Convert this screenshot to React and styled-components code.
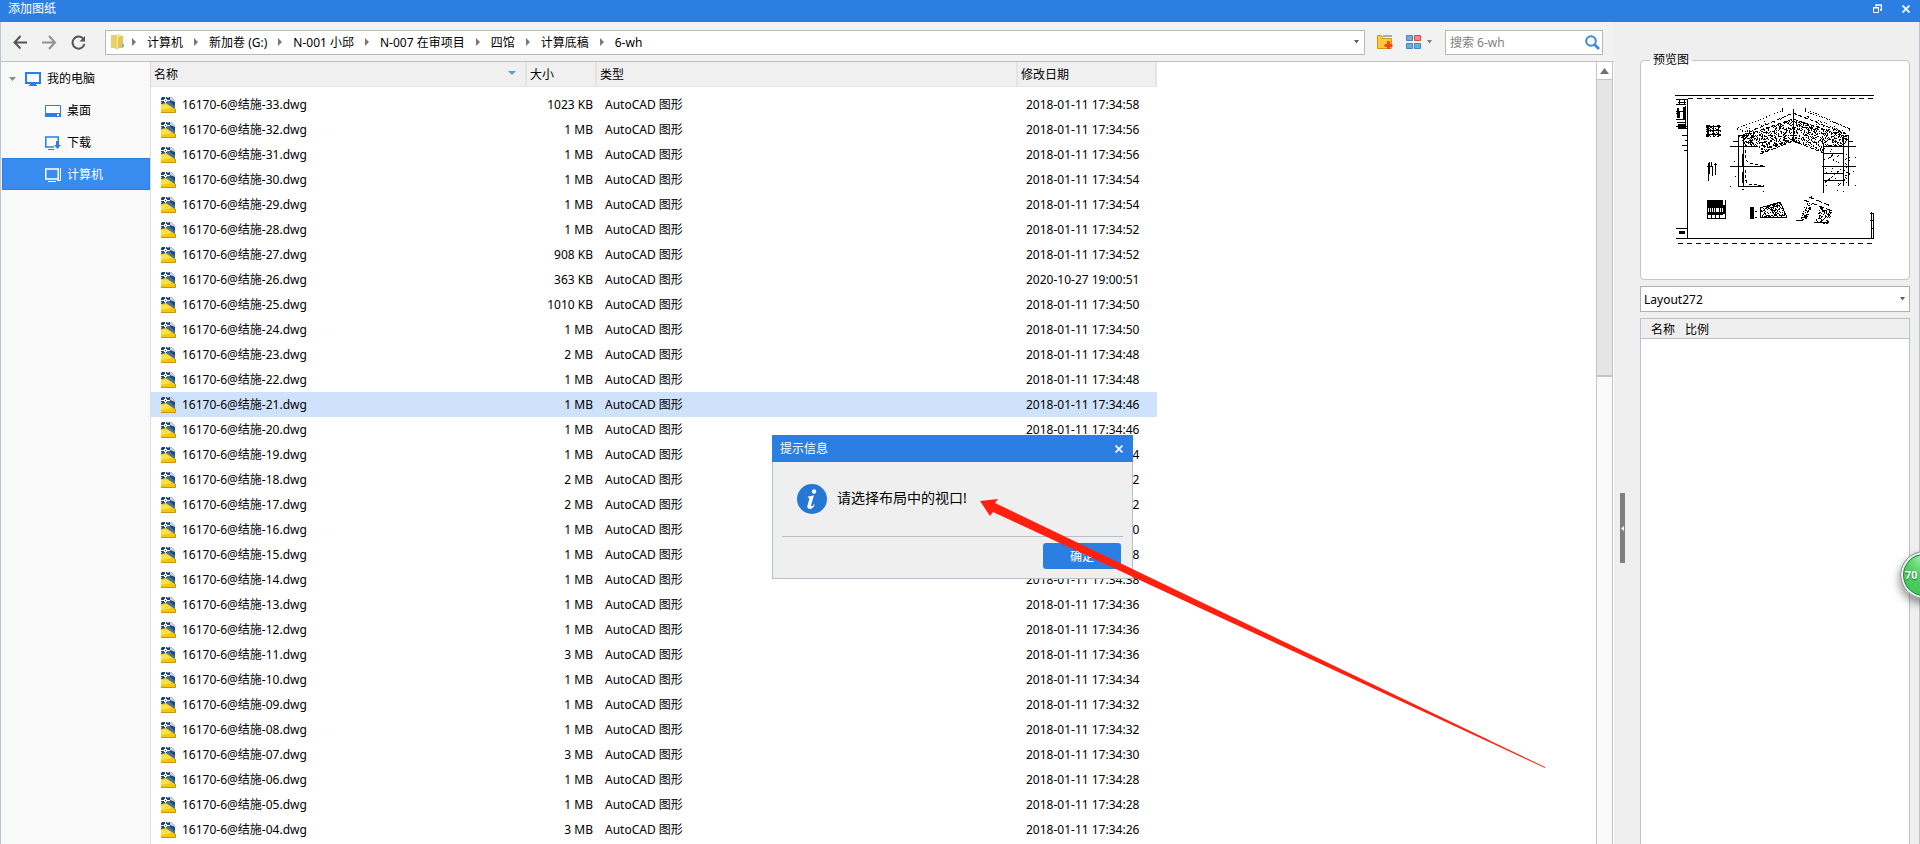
import { useState } from "react";
import styled, { createGlobalStyle } from "styled-components";

const GlobalStyle = createGlobalStyle`
  * {
    box-sizing: border-box;
  }

  body {
    margin: 0;
    overflow: hidden;
    font-family: "Noto Sans", "Noto Sans CJK SC", sans-serif;
    font-size: 12px;
    line-height: 16px;
    color: #000000;
  }

  button, input, select {
    font: inherit;
    color: inherit;
    margin: 0;
  }

  svg {
    display: block;
    flex: none;
  }
`;

const Window = styled.div`
  height: 100vh;
  display: flex;
  flex-direction: column;
  background-color: #efefef;
`;

const TitleBar = styled.header`
  height: 22px;
  flex: none;
  padding: 0 8px;
  display: flex;
  justify-content: space-between;
  background-color: #2c7fe2;
  color: #ffffff;
`;

const Title = styled.h1`
  margin: 0;
  font-size: 12px;
  line-height: 18px;
  font-weight: normal;
`;

const WindowButtons = styled.div`
  display: flex;
  align-items: flex-start;
  gap: 14px;
`;

const PlainButton = styled.button`
  border: none;
  background: none;
  padding: ${(props) => props.$pad || "0"};
  cursor: pointer;
`;

const Main = styled.div`
  flex: 1;
  min-height: 0;
  display: flex;
  border-left: 1px solid #bcc4d4;
  border-right: 1px solid #bcc4d4;
`;

const Browser = styled.section`
  flex: 1;
  min-width: 0;
  display: flex;
  flex-direction: column;
`;

const Toolbar = styled.div`
  height: 40px;
  flex: none;
  display: flex;
  align-items: center;
  padding: 1px 11px 0 12px;
  background-color: #f2f2f2;
  border-bottom: 1px solid #c0c0c0;
`;

const NavButtons = styled.div`
  display: flex;
  gap: 14px;
  margin-right: 19px;
`;

const AddressBar = styled.nav`
  flex: 1;
  height: 25px;
  display: flex;
  align-items: center;
  padding: 0 5px;
  background-color: #ffffff;
  border: 1px solid #b8b8b8;
`;

const Crumb = styled.a`
  padding: 1px 11px 0;
  color: #000000;
  text-decoration: none;
  white-space: nowrap;
`;

const FolderSlot = styled.span`
  margin-right: 7px;
`;

const Spacer = styled.span`
  flex: 1;
`;

const ToolButtons = styled.div`
  display: flex;
  align-items: center;
  gap: 12px;
  margin: 0 13px 0 12px;
`;

const ViewButton = styled(PlainButton)`
  display: flex;
  align-items: center;
  gap: 6px;
`;

const SearchBox = styled.label`
  width: 158px;
  height: 25px;
  display: flex;
  align-items: center;
  padding: 0 2px 0 4px;
  background-color: #ffffff;
  border: 1px solid #b8b8b8;

  > input {
    flex: 1;
    min-width: 0;
    border: none;
    outline: none;
    padding: 1px 0 0;
    background: none;
  }

  > input::placeholder {
    color: #808080;
  }
`;

const Content = styled.div`
  flex: 1;
  min-height: 0;
  display: flex;
  background-color: #ffffff;
`;

const Sidebar = styled.nav`
  width: 150px;
  flex: none;
  background-color: #f9f9f9;
  border-right: 1px solid #dcdce0;
`;

const PlaceLink = styled.a`
  height: 32px;
  margin-left: 1px;
  display: flex;
  align-items: center;
  gap: 6px;
  padding-top: 2px;
  padding-left: ${(props) => (props.$root ? "6px" : "42px")};
  color: ${(props) => (props.$active ? "#ffffff" : "#000000")};
  background-color: ${(props) => (props.$active ? "#388cf0" : "transparent")};
  border: 1px solid ${(props) => (props.$active ? "#2c7fe2" : "transparent")};
  text-decoration: none;

  > svg:first-child {
    margin-right: ${(props) => (props.$root ? "3px" : "0")};
  }
`;

const FileArea = styled.div`
  flex: 1;
  min-width: 0;
  overflow: hidden;
`;

const FileTable = styled.table`
  width: 1006px;
  table-layout: fixed;
  border-collapse: separate;
  border-spacing: 0;

  > tbody::before {
    content: "";
    display: block;
    height: 5px;
  }
`;

const HeadCell = styled.th`
  height: 25px;
  padding: 2px 9px 0 3px;
  font-weight: normal;
  text-align: left;
  background-color: #f0f0f0;
  border-right: 2px solid #e4e4e4;
  border-bottom: 1px solid #e4e4e4;
`;

const HeadLabel = styled.div`
  display: flex;
  align-items: center;
  justify-content: space-between;
`;

const Row = styled.tr`
  background-color: ${(props) => (props.$selected ? "#cfe2fc" : "#ffffff")};
  cursor: default;
`;

const Cell = styled.td`
  height: 25px;
  padding: 0 4px 0 8px;
  text-align: ${(props) => props.$align || "left"};
  white-space: nowrap;
`;

const FileName = styled.div`
  display: flex;
  align-items: center;
  gap: 6px;
  padding-left: 2px;
`;

const ScrollBar = styled.div`
  width: 17px;
  flex: none;
  margin-right: 1px;
  display: flex;
  flex-direction: column;
  background-color: #fafafa;
  border-left: 1px solid #c4c4c4;
  border-right: 1px solid #c4c4c4;
`;

const ScrollUp = styled.button`
  height: 18px;
  flex: none;
  padding: 0;
  display: grid;
  place-items: center;
  background-color: #ffffff;
  border: none;
  border-bottom: 1px solid #c4c4c4;
`;

const ScrollThumb = styled.div`
  height: 38%;
  background-color: #e5e5e5;
  border-bottom: 2px solid #c4c4c4;
`;

const Splitter = styled.div`
  width: 26px;
  flex: none;
  display: flex;
  align-items: center;
  padding-left: 6px;
`;

const CollapseButton = styled.button`
  width: 5px;
  height: 70px;
  margin-top: 190px;
  padding: 0;
  display: grid;
  place-items: center;
  border: none;
  background-color: #808080;
`;

const SidePanel = styled.aside`
  width: 279px;
  flex: none;
  display: flex;
  flex-direction: column;
  gap: 6px;
  padding: 30px 9px 0 0;
`;

const PreviewBox = styled.fieldset`
  height: 228px;
  flex: none;
  margin: 0;
  padding: 0 0 0 34px;
  border: 1px solid #c4c4c8;
  border-radius: 4px;
  /* the panel colour shows above the frame line */
  background: linear-gradient(#ffffff, #ffffff) no-repeat;

  > legend {
    margin-left: -25px;
    padding: 0 3px;
    line-height: 16px;
    background: linear-gradient(#efefef 50%, #ffffff 50%);
  }

  > svg {
    margin-top: 26px;
  }
`;

const SelectWrap = styled.div`
  height: 26px;
  flex: none;
  display: flex;
  align-items: center;
  padding-right: 4px;
  background-color: #ffffff;
  border: 1px solid #b0b0b0;

  > select {
    flex: 1;
    appearance: none;
    border: none;
    outline: none;
    background: none;
    padding: 2px 3px 0;
  }
`;

const Viewports = styled.div`
  flex: 1;
  background-color: #ffffff;
  border: 1px solid #c0c0cc;
  border-bottom: none;
`;

const ViewportTable = styled.table`
  width: 100%;
  border-spacing: 0;
  background-color: #efefef;
  border-bottom: 1px solid #c0c0c4;

  th {
    width: 34px;
    height: 19px;
    padding: 2px 0 0 10px;
    font-weight: normal;
    text-align: left;
    white-space: nowrap;
  }

  th:last-child {
    width: auto;
  }
`;

const Dialog = styled.div.attrs({ role: "alertdialog" })`
  position: fixed;
  left: 772px;
  top: 435px;
  width: 361px;
  background-color: #efefef;
  border: 1px solid #b8c0d0;
  border-top: none;
`;

const DialogTitle = styled.div`
  height: 27px;
  margin: 0 -1px;
  padding: 0 10px 0 8px;
  display: flex;
  align-items: center;
  justify-content: space-between;
  background-color: #2c7fe2;
  color: #ffffff;
`;

const DialogBody = styled.div`
  height: 75px;
  margin: 0 9px;
  padding: 0 15px;
  display: flex;
  align-items: center;
  gap: 10px;
  font-size: 14px;
  line-height: 20px;
  border-bottom: 1px solid #b8bec8;
`;

const Message = styled.p`
  margin: 0;
  padding-bottom: 2px;
`;

const DialogFooter = styled.div`
  padding: 6px 11px 9px;
  display: flex;
  justify-content: flex-end;
`;

const OkButton = styled.button`
  width: 78px;
  height: 26px;
  padding: 2px 0 0;
  border: none;
  border-radius: 3px;
  background-color: #2c7fe2;
  color: #ffffff;
`;

const Arrow = styled.svg`
  position: fixed;
  left: 980px;
  top: 499px;
  pointer-events: none;
`;

const SpeedBall = styled.button`
  position: fixed;
  right: -28px;
  top: 551px;
  width: 48px;
  height: 48px;
  padding: 0 0 0 4px;
  text-align: left;
  font-weight: bold;
  font-size: 11px;
  color: #ffffff;
  text-shadow: 0 1px 1px #1c6b35;
  border: 1px solid #9a9a9a;
  border-radius: 50%;
  background: radial-gradient(circle at 50% 10%, #a8ecae 0, #4fd060 40%, #3fc054 100%);
  box-shadow: inset 0 0 0 2px #f2f2f2, inset 0 0 0 3px #1f7d50, -1px 5px 8px rgba(0, 0, 0, 0.4);
`;

const crumbs = ["计算机", "新加卷 (G:)", "N-001 小邱", "N-007 在审项目", "四馆", "计算底稿", "6-wh"];

const files = [
  ["33", "1023 KB", "2018-01-11 17:34:58"],
  ["32", "1 MB", "2018-01-11 17:34:56"],
  ["31", "1 MB", "2018-01-11 17:34:56"],
  ["30", "1 MB", "2018-01-11 17:34:54"],
  ["29", "1 MB", "2018-01-11 17:34:54"],
  ["28", "1 MB", "2018-01-11 17:34:52"],
  ["27", "908 KB", "2018-01-11 17:34:52"],
  ["26", "363 KB", "2020-10-27 19:00:51"],
  ["25", "1010 KB", "2018-01-11 17:34:50"],
  ["24", "1 MB", "2018-01-11 17:34:50"],
  ["23", "2 MB", "2018-01-11 17:34:48"],
  ["22", "1 MB", "2018-01-11 17:34:48"],
  ["21", "1 MB", "2018-01-11 17:34:46"],
  ["20", "1 MB", "2018-01-11 17:34:46"],
  ["19", "1 MB", "2018-01-11 17:34:44"],
  ["18", "2 MB", "2018-01-11 17:34:42"],
  ["17", "2 MB", "2018-01-11 17:34:42"],
  ["16", "1 MB", "2018-01-11 17:34:40"],
  ["15", "1 MB", "2018-01-11 17:34:38"],
  ["14", "1 MB", "2018-01-11 17:34:38"],
  ["13", "1 MB", "2018-01-11 17:34:36"],
  ["12", "1 MB", "2018-01-11 17:34:36"],
  ["11", "3 MB", "2018-01-11 17:34:36"],
  ["10", "1 MB", "2018-01-11 17:34:34"],
  ["09", "1 MB", "2018-01-11 17:34:32"],
  ["08", "1 MB", "2018-01-11 17:34:32"],
  ["07", "3 MB", "2018-01-11 17:34:30"],
  ["06", "1 MB", "2018-01-11 17:34:28"],
  ["05", "1 MB", "2018-01-11 17:34:28"],
  ["04", "3 MB", "2018-01-11 17:34:26"],
];

const Triangle = ({ dir = "down", color = "#606060" }) =>
  dir === "down" ? (
    <svg width='5' height='4'>
      <path d='M0 0h5L2.5 3.5z' fill={color} />
    </svg>
  ) : (
    <svg width='4' height='8'>
      <path d='M0 0l4 4-4 4z' fill={color} />
    </svg>
  );

const CloseIcon = () => (
  <svg width='8' height='8'>
    <path d='M.5 .5l7 7M7.5 .5l-7 7' stroke='#fff' strokeWidth='1.7' />
  </svg>
);

const FileIcon = () => (
  <svg width='15' height='16' viewBox='0 0 15 16'>
    <path d='M0 0h10l4 4v9H0z' fill='#1d4673' />
    <path d='M7 3l7 6v3L5 7z' fill='#47709a' />
    <path d='M9 0h1l4 4v1l-5-2z' fill='#c9d6e2' />
    <path d='M0 0h1v1H0zM6 0h2v1H6zM0 5h1v1H0z' fill='#9fb4c8' />
    <path d='M4.500 0v7M0 3.500h9' stroke='#fff' />
    <path d='M3 2h1v1H3zM5 2h1v1H5zM3 4h1v1H3zM5 4h1v1H5z' fill='#fff' />
    <path d='M4 3h1v1H4z' fill='#1d4673' />
    <path d='M0 7l5-1 9 6v4H0z' fill='#f2c80c' />
    <path d='M0 8l5-1 6 4-11 2z' fill='#fae04a' />
    <path d='M0 15.500h14.500V12' fill='none' stroke='#c8960c' />
  </svg>
);

const Monitor = ({ kind, color = "#2c7fe2" }) => (
  <svg width='16' height='14' viewBox='0 0 16 14' fill='none' stroke={color}>
    {kind === "root" && (
      <>
        <path d='M1 1h14v10H1z' strokeWidth='2' />
        <path d='M5 12.5h6M4 13.5h8' />
      </>
    )}
    {kind === "desktop" && (
      <>
        <path d='M.5 1.5h15v11H.5z' fill='#fff' />
        <path d='M0 9h16v4H0z' fill={color} stroke='none' />
        <path d='M12 10h2v2h-2z' fill='#fff' stroke='none' />
      </>
    )}
    {kind === "download" && (
      <>
        <path d='M9 11H.75V1h12.5v4' strokeWidth='1.5' />
        <path d='M3 13.5h6' />
        <path d='M11 5h3v4h2l-3.5 4L9 9h2z' fill={color} stroke='none' />
      </>
    )}
    {kind === "computer" && (
      <>
        <path d='M.75 1h12.5v10H.75z' strokeWidth='1.5' />
        <path d='M15.5 0v12.5H12M3 13.5h8' />
      </>
    )}
  </svg>
);

// fills a polygon with drawing noise, the same on every render
const speckle = (pts, density, seed) => {
  let s = seed * 7919;
  const rand = () => {
    s = (s + 0x6d2b79f5) | 0;
    let t = Math.imul(s ^ (s >>> 15), 1 | s);
    t = (t + Math.imul(t ^ (t >>> 7), 61 | t)) ^ t;
    return ((t ^ (t >>> 14)) >>> 0) / 4294967296;
  };
  const inside = (x, y) =>
    pts.reduce((hit, [x1, y1], i) => {
      const [x2, y2] = pts[(i + 1) % pts.length];
      const cross = y1 > y !== y2 > y && x < ((x2 - x1) * (y - y1)) / (y2 - y1) + x1;
      return cross ? !hit : hit;
    }, false);
  let d = "";
  for (let y = 0; y < 152; y++) {
    for (let x = 0; x < 200; x++) {
      if (inside(x, y) && rand() < density) d += `M${x} ${y}h1v1h-1z`;
    }
  }
  return d;
};

const noise = [
  speckle([[64, 41], [118, 25], [118, 47], [85, 60], [83, 53], [70, 52]], 0.36, 7),
  speckle([[119, 25], [174, 41], [173, 51], [150, 52], [148, 58], [119, 47]], 0.36, 23),
  speckle([[70, 40], [92, 34], [92, 48], [74, 50]], 0.2, 41),
  speckle([[85, 114], [105, 108], [112, 124], [85, 124]], 0.4, 5),
  speckle([[131, 107], [137, 110], [131, 127], [124, 127]], 0.38, 9),
  speckle([[145, 112], [157, 118], [153, 130], [140, 128]], 0.42, 11),
  speckle([[168, 52], [175, 52], [175, 92], [168, 92]], 0.14, 3),
  speckle([[148, 52], [166, 52], [166, 92], [148, 92]], 0.04, 13),
  speckle([[31, 31], [46, 31], [46, 43], [31, 43]], 0.3, 17),
  speckle([[123, 18], [170, 36], [168, 41], [121, 23]], 0.14, 29),
  speckle([[65, 35], [112, 18], [114, 23], [68, 40]], 0.06, 31),
].join("");

const Drawing = () => (
  <svg width='200' height='152' viewBox='0 0 200 152' shapeRendering='crispEdges' fill='none' stroke='#000'>
    <path d='M0 1.5h199M1 144.5h198M12.5 5v139M196.5 118v26M198.5 119v25' />
    <path d='M195 119h4M195 126h3M196 134h3' />
    <path d='M13 4.5h186M3 149.5h196' strokeDasharray='5 4' />
    <path d='M1 5.5h11M3 8.5h8M4 6v5M9 5v6M1 10.5h10M1 17.5h10M4.5 17v7M8.5 17v8M10.5 12v20M1 19.5h4M1 25.5h10M2 28.5h9M1 32.5h11M3 34.5h9M7 41.5h5M10 46.5h2M7 51.5h5M9 56.5h3M1 134.5h11' />
    <path d='M2 14h2v10H2zM8 13h3v13H8zM3 30h8v5H3zM4 137h6v3H4z' fill='#000' stroke='none' />
    <path d='M118.5 15v32M63.5 41v51M68.5 42v50M67.5 60v12M67.5 78v11M55 52.5h28M55 72.5h35M63 92.5h26M148.5 49v50M168.5 41v51M173.5 41v51M148 52.5h33M148 59.5h20M147 72.5h34M148 79.5h20M148 86.5h20M58 47.5h5M174 47.5h4' />
    <path d='M63 34L107 17M130 17l43 17M135 17l40 18' strokeDasharray='1 2' />
    <path d='M63 43l55-24M68 42l50-17M118 19l53 21M118 25l54 18M85 60l33-13M118 47l31 12M93 54l25-9' strokeDasharray='4 2' />
    <path d='M70 56q0 11 4 13l14 3M70 76q0 14 4 14l15 2' strokeDasharray='3 2' />
    <path d='M153 65l7-6M150 89l16-14' strokeDasharray='3 1' />
    <path d='M31 32.5h15M32 36.5h14M31 40.5h15M33.5 31v12M38.5 31v12M43.5 31v12M32.5 31v12' />
    <path d='M33.5 69v18M34.5 68v12M36.5 68v5M37.5 72v10M40.5 69v12M32 72.5h5M39 70.5h3' />
    <path d='M32 106h16v8H32zM32 118h16v3H32zM75 113h4v12h-4zM48 111h3v9h-3z' fill='#000' stroke='none' />
    <path d='M32.5 106v19M50.5 106v19M32 124.5h18M36.5 114v11M40.5 114v11M44.5 114v11M34.5 114v4M38.5 114v4M46.5 114v4' />
    <path d='M85.5 114v10M85 123.5h27M85 114l20-6M105 108l7 15M92 113l15 9M98 109v6' />
    <path d='M129 106l28 11M121 126h8M139 128h14M134 103l22 9' strokeDasharray='6 2' />
    <path d='M59 67h1M60 82h1M55 92h1M67 95h2M88 97h1M178 77h1M180 91h1M162 96h1M168 97h1M80 117h2M80 123h2M62 34v2M107 14v4M130 14v4M174 34v3M180 63h1M136 102v3' />
    <path d={noise} fill='#000' stroke='none' />
  </svg>
);

const App = () => {
  const [selected, setSelected] = useState("21");
  const [isOpen, setIsOpen] = useState(true);
  const [keyword, setKeyword] = useState("");

  return (
    <Window>
      <GlobalStyle />
      <TitleBar>
        <Title>添加图纸</Title>
        <WindowButtons>
          <PlainButton aria-label='还原' $pad='4px 4px'>
            <svg width='9' height='9' fill='none' stroke='#fff'>
              <path d='M3 2.5V1h5.5v5H7' strokeWidth='1.5' />
              <path d='M.5 4h5v4.5h-5zM0 3.5h6' />
            </svg>
          </PlainButton>
          <PlainButton aria-label='关闭' $pad='5px 2px'>
            <CloseIcon />
          </PlainButton>
        </WindowButtons>
      </TitleBar>
      <Main>
        <Browser>
          <Toolbar>
            <NavButtons>
              <PlainButton aria-label='后退'>
                <svg width='15' height='15' fill='none' stroke='#555' strokeWidth='2'>
                  <path d='M14 7.5H1.5M7.5 1L1.5 7.5l6 6' />
                </svg>
              </PlainButton>
              <PlainButton aria-label='前进'>
                <svg width='15' height='15' fill='none' stroke='#929292' strokeWidth='2'>
                  <path d='M0 7.5h13M7 1l6 6.5L7 14' />
                </svg>
              </PlainButton>
              <PlainButton aria-label='刷新'>
                <svg width='15' height='15' fill='none' stroke='#555' strokeWidth='2'>
                  <path d='M12.5 4.2A6 6 0 1 0 13.4 9' />
                  <path d='M14 1v5.500H8.500z' fill='#555' stroke='none' />
                </svg>
              </PlainButton>
            </NavButtons>
            <AddressBar>
              <FolderSlot>
                <svg width='14' height='16'>
                  <path d='M0 1h6v13H0z' fill='#e9cf6c' />
                  <path d='M5 0h5v13l-3 3-3-1z' fill='#f7e6a0' />
                  <path d='M9 2h3v12H7V4z' fill='#e3c558' />
                  <path d='M5 1v14' stroke='#dcc05c' />
                  <path d='M11 10h2v3h-2z' fill='#6fb5dc' />
                </svg>
              </FolderSlot>
              {crumbs.map((crumb) => (
                <span key={crumb} style={{ display: "contents" }}>
                  <Triangle dir='right' color='#777' />
                  <Crumb href='#'>{crumb}</Crumb>
                </span>
              ))}
              <Spacer />
              <Triangle />
            </AddressBar>
            <ToolButtons>
              <PlainButton aria-label='新建文件夹'>
                <svg width='17' height='16'>
                  <path d='M.5 1.5h4l1 3h9v10H.5z' fill='#fccb3a' stroke='#d09a10' />
                  <path d='M6 1h9v2H6z' fill='#aaa' />
                  <path d='M11.500 7v8M7.500 11.500h8' stroke='#ee4b22' strokeWidth='3' />
                </svg>
              </PlainButton>
              <ViewButton aria-label='视图'>
                <svg width='15' height='14' fill='#6bb0d0' stroke='#3a87d8'>
                  <path d='M.5.5h6v5h-6zM.5 8.5h6v5h-6zM8.5 8.5h6v5h-6z' />
                  <path d='M8.5.5h6v5h-6z' fill='#f58a78' stroke='#e0483a' />
                </svg>
                <Triangle color='#808080' />
              </ViewButton>
            </ToolButtons>
            <SearchBox>
              <input
                aria-label='搜索'
                placeholder='搜索 6-wh'
                value={keyword}
                onChange={(e) => setKeyword(e.target.value)}
              />
              <svg width='15' height='15' fill='none' stroke='#3f86d8'>
                <circle cx='6' cy='6' r='4.8' strokeWidth='2' />
                <path d='M9.5 9.5l4.5 4.5' strokeWidth='2.6' />
              </svg>
            </SearchBox>
          </Toolbar>
          <Content>
            <Sidebar>
              <PlaceLink href='#' $root>
                <svg width='7' height='5'>
                  <path d='M0 0h7L3.5 4z' fill='#8a8a8a' />
                </svg>
                <Monitor kind='root' />
                我的电脑
              </PlaceLink>
              <PlaceLink href='#'>
                <Monitor kind='desktop' />
                桌面
              </PlaceLink>
              <PlaceLink href='#'>
                <Monitor kind='download' />
                下载
              </PlaceLink>
              <PlaceLink href='#' $active>
                <Monitor kind='computer' color='#fff' />
                计算机
              </PlaceLink>
            </Sidebar>
            <FileArea>
              <FileTable>
                <colgroup>
                  <col width='376' />
                  <col width='70' />
                  <col width='421' />
                  <col width='139' />
                </colgroup>
                <thead>
                  <tr>
                    <HeadCell>
                      <HeadLabel>
                        名称
                        <svg width='8' height='8'>
                          <path d='M0 0h8L4 4z' fill='#5aa3c8' />
                        </svg>
                      </HeadLabel>
                    </HeadCell>
                    <HeadCell>大小</HeadCell>
                    <HeadCell>类型</HeadCell>
                    <HeadCell>修改日期</HeadCell>
                  </tr>
                </thead>
                <tbody>
                  {files.map(([no, size, date]) => (
                    <Row key={no} $selected={no === selected} onClick={() => setSelected(no)}>
                      <Cell>
                        <FileName>
                          <FileIcon />
                          {`16170-6@结施-${no}.dwg`}
                        </FileName>
                      </Cell>
                      <Cell $align='right'>{size}</Cell>
                      <Cell>AutoCAD 图形</Cell>
                      <Cell>{date}</Cell>
                    </Row>
                  ))}
                </tbody>
              </FileTable>
            </FileArea>
            <ScrollBar>
              <ScrollUp aria-label='向上滚动'>
                <svg width='9' height='6'>
                  <path d='M0 6h9L4.5 0z' fill='#707070' />
                </svg>
              </ScrollUp>
              <ScrollThumb />
            </ScrollBar>
          </Content>
        </Browser>
        <Splitter>
          <CollapseButton aria-label='收起'>
            <svg width='3' height='5'>
              <path d='M3 0v5L0 2.5z' fill='#fff' />
            </svg>
          </CollapseButton>
        </Splitter>
        <SidePanel>
          <PreviewBox>
            <legend>预览图</legend>
            <Drawing />
          </PreviewBox>
          <SelectWrap>
            <select aria-label='布局' defaultValue='Layout272'>
              <option>Layout272</option>
            </select>
            <Triangle />
          </SelectWrap>
          <Viewports>
            <ViewportTable>
              <thead>
                <tr>
                  <th>名称</th>
                  <th>比例</th>
                </tr>
              </thead>
            </ViewportTable>
          </Viewports>
        </SidePanel>
      </Main>
      {isOpen === true ? (
        <Dialog aria-label='提示信息'>
          <DialogTitle>
            提示信息
            <PlainButton aria-label='关闭提示' onClick={() => setIsOpen(false)}>
              <CloseIcon />
            </PlainButton>
          </DialogTitle>
          <DialogBody>
            <svg width='30' height='30'>
              <circle cx='15' cy='15' r='15' fill='#2478d4' />
              <circle cx='17' cy='7.5' r='2.2' fill='#fff' />
              <path d='M11 12.5q3.5-.5 6-1.2l-2.8 9.5q-.5 2 .5 1.7t2.2-2.2l.8.6q-2.2 4-5 4-3 0-2.2-3.3l1.7-6q.5-1.9-1.4-2z' fill='#fff' />
            </svg>
            <Message>请选择布局中的视口!</Message>
          </DialogBody>
          <DialogFooter>
            <OkButton onClick={() => setIsOpen(false)}>确定</OkButton>
          </DialogFooter>
        </Dialog>
      ) : null}
      <Arrow width='566' height='270'>
        <path d='M0 2L18 0l-3 4L565 268l0 1L13 13l-3 4z' fill='#ff2010' />
      </Arrow>
      <SpeedBall>70</SpeedBall>
    </Window>
  );
};

export default App;
